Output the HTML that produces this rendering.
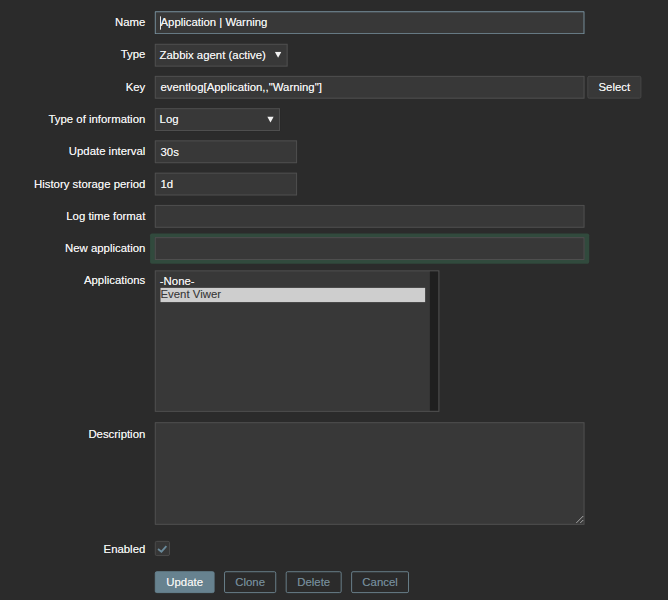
<!DOCTYPE html>
<html><head><meta charset="utf-8">
<style>
html,body{margin:0;padding:0;}
body{width:668px;height:600px;overflow:hidden;background:#2b2b2b;position:relative;}
#w{position:absolute;left:0;top:0;width:704px;height:633px;transform-origin:0 0;transform:translate(0.2px,-0.05px) scale(0.9485,0.949);
 font-family:"Liberation Sans",Arial,sans-serif;font-size:12px;color:#f2f2f2;text-shadow:0 0 0.7px rgba(242,242,242,0.75);}
.l{position:absolute;left:0;width:153px;text-align:right;white-space:nowrap;line-height:14px;}
.f{position:absolute;box-sizing:border-box;background:#383838;border:1px solid #505050;
 white-space:nowrap;overflow:hidden;left:163px;height:24px;}
.f span{position:absolute;left:5px;top:4px;line-height:14px;}
.s span{left:4px;top:4px;transform:translateY(-0.3px);}
.arr{position:absolute;}
.b{position:absolute;box-sizing:border-box;top:602px;height:23px;border:1px solid #6b828e;color:#748b98;
 text-align:center;line-height:21px;border-radius:2px;text-shadow:0 0 0.7px rgba(111,135,148,0.7);}
.b b{font-weight:normal;display:inline-block;transform:translateY(0.45px);}
</style></head><body><div id="w">
<div class="l" style="top:16px;transform:translateY(0.65px)">Name</div>
<div class="f" style="top:12px;width:453px;border-color:#78919e;border-radius:0.5px"><span style="top:4px;transform:translateY(-0.3px)">Application | Warning</span>
<i style="position:absolute;left:5px;top:4px;width:1px;height:14px;background:#f2f2f2;transform:translate(-0.5px,0.3px)"></i></div>

<div class="l" style="top:51px;transform:translateY(-0.4px)">Type</div>
<div class="f s" style="top:46px;width:140px;height:24px;transform:translateY(0.2px)"><span>Zabbix agent (active)</span>
<svg class="arr" style="left:125px;top:8px;transform:translate(0.5px,-0.5px)" width="7" height="7" viewBox="0 0 7 7"><path d="M0 0 H7 L3.5 6.2 Z" fill="#f2f2f2"/></svg></div>

<div class="l" style="top:85px;transform:translateY(-0.3px)">Key</div>
<div class="f" style="top:80px;width:453px"><span>eventlog[Application,,"Warning"]</span></div>
<div class="f" style="left:619px;top:80px;width:57px;border-color:#484848;text-align:center;line-height:22px;border-radius:2px"><b style="font-weight:normal;display:inline-block;transform:translateY(-0.5px)">Select</b></div>

<div class="l" style="top:119px;transform:translateY(-0.1px)">Type of information</div>
<div class="f s" style="top:114px;width:132px;height:24px;transform:translateY(0.1px)"><span>Log</span>
<svg class="arr" style="left:117px;top:8px;transform:translate(0.45px,-0.25px)" width="7" height="7" viewBox="0 0 7 7"><path d="M0 0 H7 L3.5 6.2 Z" fill="#f2f2f2"/></svg></div>

<div class="l" style="top:153px;transform:translateY(-0.4px)">Update interval</div>
<div class="f" style="top:148px;width:150px"><span>30s</span></div>

<div class="l" style="top:187px;transform:translateY(-0.3px)">History storage period</div>
<div class="f" style="top:182px;width:150px"><span>1d</span></div>

<div class="l" style="top:221px">Log time format</div>
<div class="f" style="top:216px;width:453px"></div>

<div class="l" style="top:255px">New application</div>
<div style="position:absolute;left:158px;top:246px;width:463px;height:32px;background:#314a3d;border-radius:2px"></div>
<div class="f" style="top:250px;width:453px"></div>

<div class="l" style="top:289px;transform:translateY(-0.35px)">Applications</div>
<div class="f" style="top:285px;width:300px;height:149px">
 <div style="position:absolute;left:4px;top:3px;line-height:14px;transform:translateX(0.3px)">-None-</div>
 <div style="position:absolute;left:5px;top:17px;width:279px;height:15px;background:#cecece;color:#3a3a3a;line-height:14px;text-shadow:0 0 0.5px rgba(60,60,60,0.3);transform:translateY(0.4px)">Event Viwer</div>
 <div style="position:absolute;right:0;top:0;width:9px;height:100%;background:#1f1f1f"></div>
</div>

<div class="l" style="top:450px;transform:translateY(0.4px)">Description</div>
<div class="f" style="top:445px;width:453px;height:108px"></div>
<svg style="position:absolute;left:604px;top:541px;transform:translate(0.7px,0.1px)" width="11" height="11" viewBox="0 0 11 11"><path d="M2.7 10 L10 2.7 M6.9 10 L10 6.9" stroke="#b0b0b0" stroke-width="1" fill="none"/></svg>

<div class="l" style="top:572px;transform:translateY(0.1px)">Enabled</div>
<div class="f" style="top:570px;width:16px;height:16px;border-color:#4c4c4c;background:#363636;border-radius:2px"></div>
<svg style="position:absolute;left:163px;top:570px" width="16" height="16" viewBox="0 0 16 16"><path d="M3.4 8.6 L7 11.4 L12.2 5.6" stroke="#6a8a9b" stroke-width="1.9" fill="none"/></svg>

<div class="b" style="left:163px;width:63px;background:#67828f;border-color:#67828f;color:#f2f2f2;text-shadow:0 0 0.7px rgba(242,242,242,0.75)"><b>Update</b></div>
<div class="b" style="left:236px;width:55px"><b>Clone</b></div>
<div class="b" style="left:301px;width:59px"><b>Delete</b></div>
<div class="b" style="left:370px;width:61px"><b>Cancel</b></div>
</div></body></html>
